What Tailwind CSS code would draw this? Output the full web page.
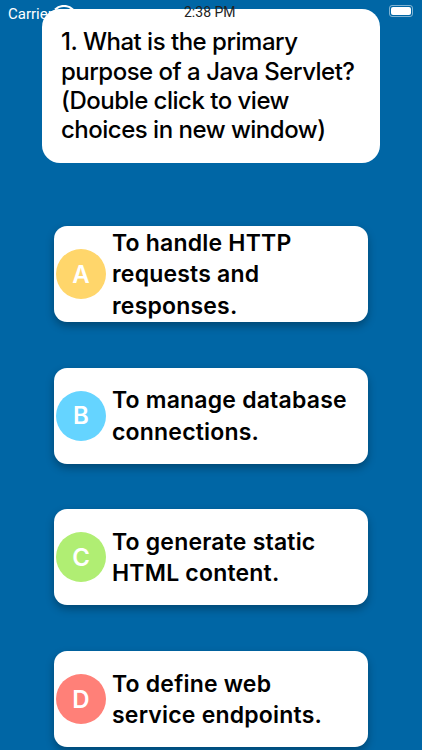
<!DOCTYPE html>
<html lang="en">
<head>
  <meta charset="UTF-8" />
  <meta name="viewport" content="width=device-width, initial-scale=1" />
  <title>Quiz</title>
  <script src="https://cdn.jsdelivr.net/npm/@tailwindcss/browser@4"></script>
</head>
<body class="bg-[#0066a5] font-['Inter','Liberation_Sans',sans-serif]">

<div class="relative w-[422px] h-[750px] overflow-hidden">
  <!-- Status bar, sits under the question card -->
  <div class="absolute top-0 left-0 w-full h-6 text-white text-[15px] font-['Roboto',sans-serif]">
    <span class="absolute left-2 top-[3px]">Carrier</span>
    <svg class="absolute left-[54px] top-[5px]" width="20" height="14" viewBox="0 0 20 14">
      <path d="M1 4.5a13 13 0 0 1 18 0" fill="none" stroke="white" stroke-width="2"/>
    </svg>
    <div class="absolute left-[389px] top-[5px] w-[24px] h-[12px] rounded-[3px] border border-white/50 p-px">
      <div class="w-full h-full rounded-[2px] bg-white"></div>
    </div>
  </div>

  <main class="relative flex flex-col items-center pt-[9px]">
    <!-- Question -->
    <div class="w-[338px] h-[154px] bg-white rounded-[18px] pl-[19px] pr-3 flex flex-col justify-center text-black text-[24px] leading-[29.4px] tracking-[-0.5px] font-[450]">
      <p>1. What is the primary purpose of a Java Servlet? (Double click to view choices in new window)</p>
    </div>

    <!-- 2:38 PM stays on top of the card -->
    <span class="absolute top-[2px] left-[184px] text-[14px] leading-[20px] text-[#222] font-['Roboto',sans-serif]">2:38 PM</span>

    <!-- Choices -->
    <div class="mt-[63px] w-[314px] flex flex-col gap-[45.7px]">
      <div class="h-[96px] bg-white rounded-[13px] shadow-[0_4px_8px_rgba(0,0,0,0.3)] flex items-center pl-[2px] pr-2 gap-[6px]">
        <div class="w-[50px] h-[50px] shrink-0 rounded-full bg-[#ffd66b] flex items-center justify-center pt-px text-white text-[24px] font-semibold">A</div>
        <p class="pt-[2px] text-black text-[23px] leading-[31.5px] font-semibold tracking-[0.2px]">To handle HTTP requests and responses.</p>
      </div>
      <div class="h-[96px] bg-white rounded-[13px] shadow-[0_4px_8px_rgba(0,0,0,0.3)] flex items-center pl-[2px] pr-2 gap-[6px]">
        <div class="w-[50px] h-[50px] shrink-0 rounded-full bg-[#65d4ff] flex items-center justify-center pt-px text-white text-[24px] font-semibold">B</div>
        <p class="pt-[2px] text-black text-[23px] leading-[31.5px] font-semibold tracking-[0.2px]">To manage database connections.</p>
      </div>
      <div class="h-[96px] bg-white rounded-[13px] shadow-[0_4px_8px_rgba(0,0,0,0.3)] flex items-center pl-[2px] pr-2 gap-[6px]">
        <div class="w-[50px] h-[50px] shrink-0 rounded-full bg-[#b0ee73] flex items-center justify-center pt-px text-white text-[24px] font-semibold">C</div>
        <p class="pt-[2px] text-black text-[23px] leading-[31.5px] font-semibold tracking-[0.2px]">To generate static HTML content.</p>
      </div>
      <div class="h-[96px] bg-white rounded-[13px] shadow-[0_4px_8px_rgba(0,0,0,0.3)] flex items-center pl-[2px] pr-2 gap-[6px]">
        <div class="w-[50px] h-[50px] shrink-0 rounded-full bg-[#ff8078] flex items-center justify-center pt-px text-white text-[24px] font-semibold">D</div>
        <p class="pt-[2px] text-black text-[23px] leading-[31.5px] font-semibold tracking-[0.2px]">To define web<br>service endpoints.</p>
      </div>
    </div>
  </main>
</div>

</body>
</html>
